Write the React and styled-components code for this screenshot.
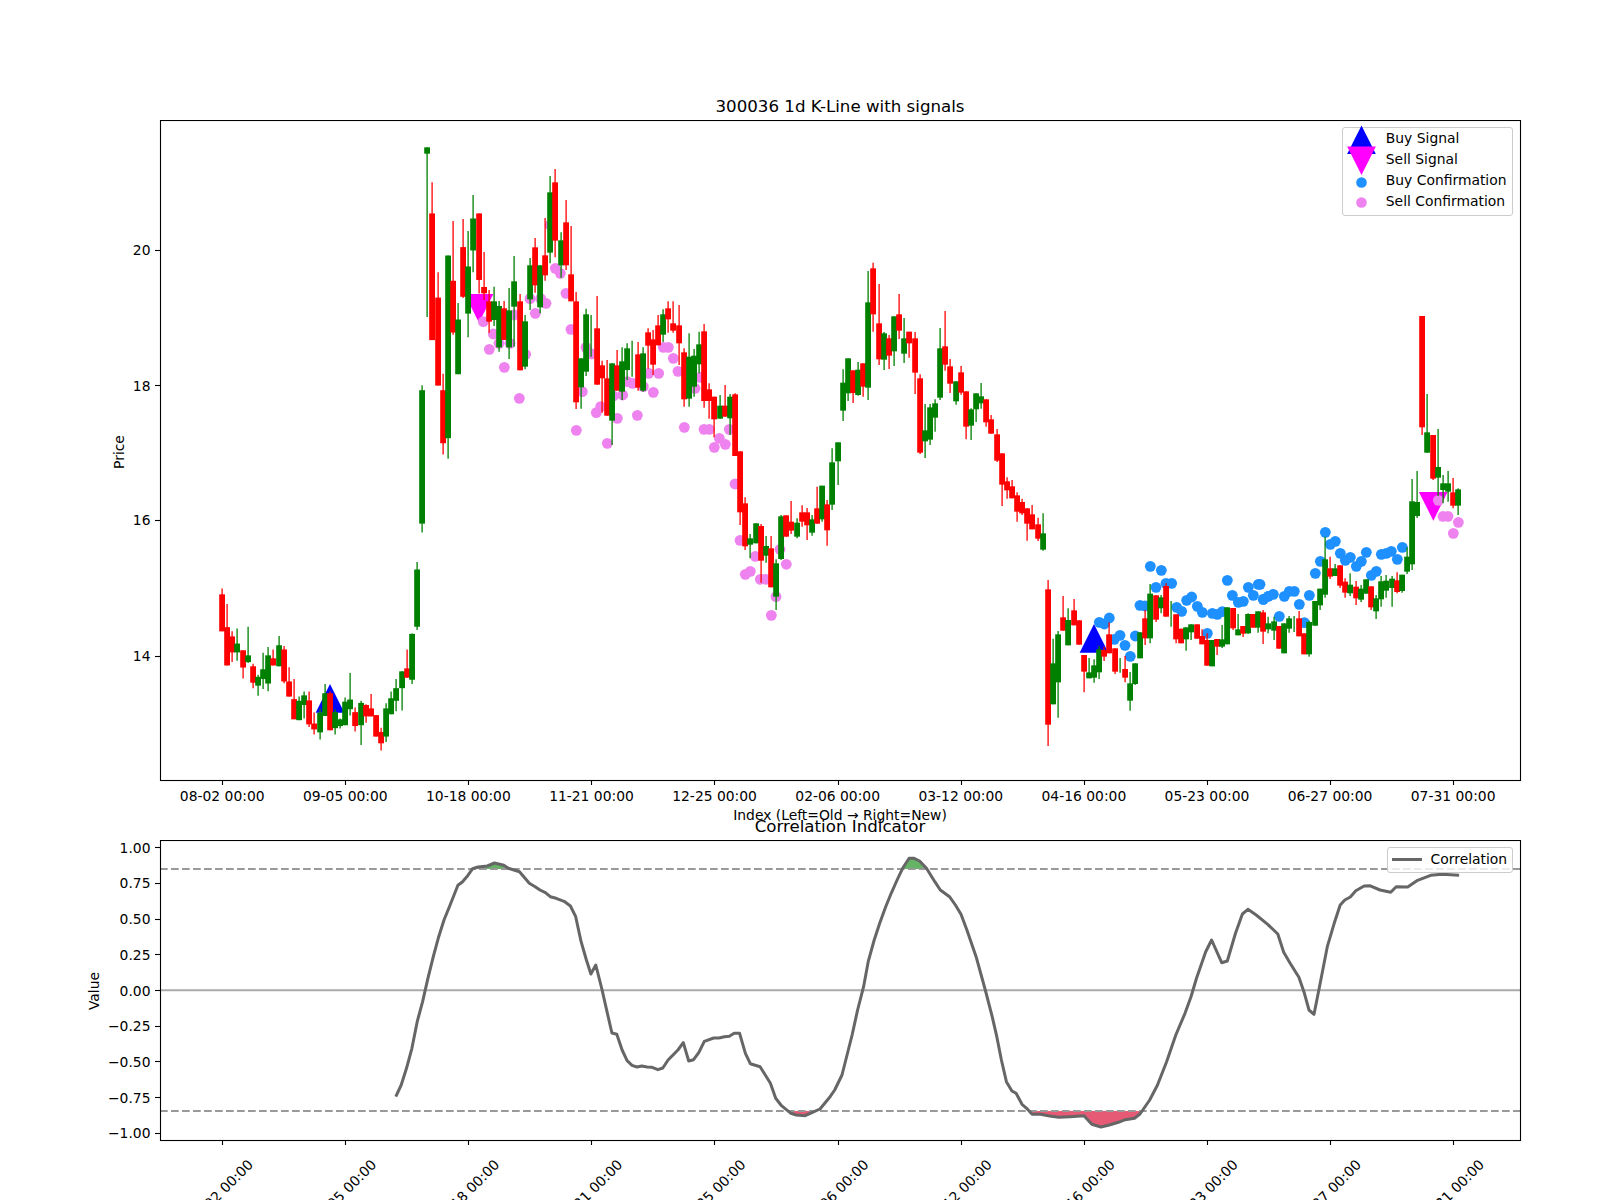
import React from 'react';
import styled, { createGlobalStyle } from 'styled-components';

const Global = createGlobalStyle`
  html, body { margin: 0; padding: 0; background: #fff; }
`;

const Figure = styled.div`
  width: 1600px;
  height: 1200px;
  overflow: hidden;
  padding-top: 96px;
  box-sizing: border-box;
  display: flex;
  flex-direction: column;
  background: #fff;
  color: #000;
  font-family: "DejaVu Sans", sans-serif;
`;
const PanelTitle = styled.div`
  margin-top: ${p => p.$overlap || 0}px;
  margin-bottom: ${p => p.$after}px;
  margin-left: 160px;
  width: 1360px;
  height: 22px;
  line-height: 22px;
  font-size: 16.67px;
  text-align: center;
  position: relative;
`;
const XAxisTitle = styled.div`
  margin-left: 160px;
  width: 1360px;
  height: 20px;
  line-height: 20px;
  font-size: 13.89px;
  text-align: center;
`;
const ChartArea = styled.div`
  position: relative;
  width: 1600px;
  height: ${p => p.$h}px;
  flex: none;
`;
const ChartSvg = styled.svg`
  display: block;
  width: 100%;
  height: 100%;
`;
const TickText = styled.text`
  font-family: "DejaVu Sans", sans-serif;
  font-size: 13.89px;
  fill: #000;
`;
const Legend = styled.div`
  position: absolute;
  box-sizing: border-box;
  top: ${p => p.$top}px;
  left: ${p => p.$left}px;
  width: ${p => p.$w}px;
  height: ${p => p.$h}px;
  padding: ${p => p.$pad};
  background: rgba(255, 255, 255, 0.8);
  border: 1px solid #ccc;
  border-radius: 3px;
  display: flex;
  flex-direction: column;
`;
const LegendRow = styled.div`
  display: flex;
  align-items: center;
  height: ${p => p.$h}px;
  gap: ${p => p.$gap}px;
  font-size: 13.89px;
  white-space: nowrap;
`;
const LegendLabel = styled.span`
  margin-top: ${p => p.$lift || 0}px;
`;
const LegendMark = styled.svg`
  width: ${p => p.$w}px;
  height: 20px;
  flex: none;
  overflow: visible;
`;

const X = i => 222.6 + 5.129 * i;
const SX = i => Math.floor(X(i)) + 0.1;

// [color, wickTop, bodyTop, bodyBottom, wickBottom] as read off the crops
const R = 1, G = 0;
const seg1 = [
[R,1113,1127,1215,1215],[R,1150,1205,1296,1296],[R,1215,1227,1265,1288],[G,1208,1244,1265,1285],[R,1260,1260,1301,1327],
[G,1204,1272,1288,1290],[R,1292,1298,1337,1350],[G,1318,1323,1344,1368],[G,1266,1305,1328,1352],[G,1252,1272,1339,1357],
[R,1258,1279,1296,1296],[G,1226,1248,1298,1298],[R,1250,1258,1334,1338],[R,1300,1334,1370,1370],[R,1328,1376,1424,1424],
[G,1370,1380,1426,1426],[G,1358,1367,1390,1422],[R,1358,1379,1436,1442],[R,1408,1434,1448,1460],[G,1398,1408,1455,1472],
[G,1340,1362,1416,1416],[R,1358,1362,1450,1450],[G,1400,1407,1445,1460],[G,1422,1424,1440,1446],[G,1372,1382,1438,1438],
[G,1314,1377,1400,1415],[R,1396,1407,1440,1453],[G,1380,1385,1438,1485],[R,1388,1390,1417,1432],[R,1364,1398,1417,1417],
[R,1414,1414,1465,1465],[R,1444,1454,1481,1498],[G,1386,1398,1465,1478],[G,1358,1374,1412,1412],[G,1328,1350,1380,1405],
[G,1310,1310,1350,1403],[R,1258,1303,1325,1325],[G,1220,1221,1330,1340],[G,1050,1068,1204,1212],[G,630,642,959,980],
[G,65,65,80,468],[R,148,222,523,523],[R,362,422,631,631],[R,603,642,768,795],[G,322,322,756,805],
[R,240,382,505,510],[G,435,474,604,604],[R,235,302,420,423],[G,264,348,460,516],[G,178,234,310,362],
[R,222,222,380,412],
];
const seg2 = [
[R,336,441,460,480],[R,450,484,545,578],[G,440,484,540,558],[G,483,498,622,635],[R,483,505,600,600],
[G,444,511,622,657],[G,348,424,500,620],[R,462,484,691,691],[G,525,544,680,688],[G,354,376,478,510],
[R,294,322,436,458],[G,375,376,502,520],[R,234,346,406,422],[G,108,157,338,370],[R,87,127,302,352],
[G,277,301,376,413],[R,180,247,376,390],[R,258,403,484,484],[R,456,484,787,807],[G,655,655,742,806],
[G,506,523,695,708],[G,525,600,600,650],[R,468,565,734,734],[R,662,676,715,818],[R,660,715,827,827],
[G,670,670,842,915],[R,630,676,752,752],[G,622,664,755,780],[G,610,625,690,720],[G,602,650,650,710],
[R,606,643,743,752],[G,622,640,752,755],[R,565,577,617,686],[R,570,598,674,705],[R,525,556,616,616],
[G,508,523,584,606],[R,484,505,538,578],[R,484,550,572,578],[R,495,556,610,675],[R,625,637,778,800],
[G,580,650,776,800],[G,627,647,740,770],[G,575,613,673,700],[R,552,574,783,803],[R,730,748,783,836],
[R,770,770,838,892],[G,765,797,836,836],[R,735,797,830,830],[G,762,770,835,885],[R,760,763,948,948],
[R,934,934,1117,1155],[R,1072,1090,1219,1230],[G,1182,1195,1214,1255],[G,1150,1150,1210,1210],[R,1152,1158,1262,1328],
[G,1188,1218,1247,1268],[R,1188,1225,1342,1342],
];
const seg3 = [
[G,958,970,1070,1110],[G,825,829,957,960],[R,826,826,890,890],[R,783,845,872,882],[G,835,848,890,895],
[R,796,817,845,860],[R,804,817,856,900],[G,825,838,878,887],[R,740,805,851,851],[G,737,737,838,845],
[R,780,793,871,917],[G,625,667,794,810],[G,607,607,664,735],[G,388,428,512,543],[G,355,355,460,483],
[R,391,391,459,489],[G,366,389,465,467],[R,370,370,440,470],[G,93,187,443,480],[R,68,85,223,275],
[R,132,250,358,375],[G,276,280,359,390],[R,285,295,347,387],[G,229,229,334,378],[R,162,223,272,297],
[G,234,295,341,369],[R,275,275,310,353],[R,276,295,398,462],[R,403,415,638,642],[G,492,571,604,654],
[G,492,502,599,615],[G,478,490,533,575],[G,264,325,473,480],[R,213,319,374,392],[R,357,379,431,459],
[G,424,424,484,494],[R,378,397,458,464],[R,454,454,560,598],[G,505,508,557,600],[G,460,460,508,546],
[G,429,469,490,506],[R,478,478,547,560],[R,525,538,581,581],[R,567,583,662,666],[R,640,640,734,798],
[R,712,724,751,776],[R,720,739,775,775],[R,757,766,815,845],[R,776,786,820,825],[R,805,805,851,902],
[R,795,823,868,868],[R,833,853,896,903],[G,820,880,929,932],
];
const seg4 = [
[R,240,268,674,738],[G,416,490,613,613],[G,393,403,547,653],[R,288,352,392,392],[G,325,360,436,436],
[R,297,331,376,376],[R,361,361,434,434],[R,465,465,515,577],[G,474,517,535,535],[G,478,496,533,548],
[G,437,448,517,537],[R,440,450,470,483],[R,367,403,460,460],[R,445,445,515,522],[G,474,500,500,518],
[R,468,507,533,547],[G,516,550,602,632],[G,490,490,552,555],[G,397,397,475,475],[R,330,355,415,435],
[G,252,281,415,430],[R,286,286,359,366],[G,285,292,325,340],[R,250,258,350,350],[G,303,340,340,380],
[R,343,343,418,430],[R,386,386,430,430],[G,382,382,418,452],[G,373,373,397,420],[R,373,373,416,416],
[R,388,408,433,433],[R,400,420,497,497],[G,420,420,499,499],[R,417,417,440,465],[G,375,418,440,444],
[G,322,322,433,433],[R,324,324,385,390],[G,342,388,406,406],[R,378,378,401,411],[G,340,342,400,402],
[R,342,342,383,383],[G,334,334,383,398],[R,330,337,395,432],[G,350,370,388,400],
];
const seg5 = [
[G,950,964,992,1020],[R,978,978,1046,1046],[G,970,970,1060,1060],[G,948,955,986,998],[G,948,970,970,996],
[R,933,955,1009,1009],[R,1000,1000,1063,1063],[G,962,966,1063,1070],[G,903,903,977,977],[G,866,866,916,930],
[G,710,778,884,893],[R,770,805,830,837],[G,792,805,828,828],[R,796,796,857,864],[R,835,845,878,893],
[G,820,854,880,888],[R,843,860,895,915],[G,855,866,899,906],[G,838,838,881,881],[R,859,859,922,930],
[G,885,895,934,957],[G,828,844,898,920],[G,825,842,872,893],[G,828,836,864,920],[R,817,841,876,880],
[G,824,824,873,878],[G,742,770,815,822],[G,537,604,793,810],[G,513,606,648,654],[R,48,48,382,405],
[G,282,397,458,458],[R,405,405,536,540],[G,387,501,533,588],[G,525,550,570,610],[G,513,550,575,605],
[R,534,577,617,625],[G,565,568,617,645],
];
const toPage = (seg, oy, k) => seg.map(([c, a, b, d, e]) => [c, oy + a / k, oy + b / k, oy + d / k, oy + e / k]);
const candles = [
  ...toPage(seg1, 120, 2.376),
  ...toPage(seg2, 140, 3),
  ...toPage(seg3, 240, 3),
  ...toPage(seg4, 500, 3),
  ...toPage(seg5, 300, 3),
];

const pts = (list, ox, oy, kx = 3, ky = 3) => list.map(([a, b]) => [ox + a / kx, oy + b / ky]);
const pink = [
  ...pts([[10,545],[40,582],[28,628],[73,682],[57,610],[90,610],[103,525],[137,643],[118,775],[150,476],[182,476],[198,490],[166,520],[226,385],[241,400],[210,255],[258,460],[273,568],[289,871],[307,755],[318,622],[335,642],[349,818],[362,800],[382,910],[400,768],[412,835],[428,765],[442,725],[458,730],[472,826],[490,740],[506,700],[536,700],[520,757],[550,622],[565,622],[580,655],[594,694],[613,862],[645,745],[660,712],[672,868],[688,868],[703,922],[718,895],[736,913],[748,868],[765,1032],[780,1201],[796,1303],[811,1294],[826,1249],[841,1318],[857,1318],[874,1426],[888,1370],[900,1228]], 480, 140),
  [786.3, 564.3],
  ...pts([[535,601],[549,649],[564,649],[595,667],[580,700]], 1260, 300),
];
const blue = [
  ...pts([[208,367],[223,372],[238,354],[253,418],[270,406],[285,436],[301,469],[316,408],[330,316],[345,318],[361,199],[378,262],[394,211],[408,250],[425,250],[440,322],[455,334],[470,301],[485,291],[502,319],[517,337],[532,400],[547,340],[562,343],[577,335],[592,241],[607,286],[625,307],[640,304],[655,262],[670,286],[685,253],[700,298],[715,289]], 1030, 500),
  ...pts([[0,853],[10,898],[25,889],[40,883],[73,889],[88,874],[103,874],[58,949],[118,913],[133,968],[148,886],[166,820],[181,784],[196,697],[211,733],[226,724],[241,760],[256,781],[271,772],[289,799],[304,784],[319,757],[334,826],[349,814],[364,763],[379,760],[394,754],[412,778],[427,742]], 1260, 300),
];

const curve = [
  ...pts([[573,1010],[585,975],[597,925],[609,865],[621,785],[633,725],[645,655],[657,590],[669,530],[681,480],[693,440],[712,376],[722,366],[734,347],[745,326],[757,321],[778,318],[794,309],[815,316],[825,325],[850,335],[872,370],[885,380],[896,390],[908,398],[919,410],[932,415],[950,424],[964,438],[976,470],[988,545],[1000,600],[1010,642],[1021,615],[1035,690],[1047,760],[1057,819],[1068,823],[1080,870],[1091,902],[1102,916],[1113,921],[1124,918],[1136,921],[1147,922],[1160,929],[1171,924],[1183,900],[1205,870],[1217,848],[1229,903],[1240,899],[1252,877],[1264,844],[1285,834],[1297,834],[1309,830],[1320,829],[1331,820],[1343,820],[1356,880],[1367,911],[1389,920],[1412,970],[1424,1015],[1437,1037],[1458,1060],[1470,1065],[1490,1067],[1505,1058]], 140, 760, 2.24, 3),
  ...pts([[0,1047],[22,1010],[32,990],[48,945],[70,825],[82,750],[95,680],[105,605],[118,540],[130,490],[143,440],[155,400],[168,360],[180,325],[194,295],[205,295],[217,303],[232,325],[250,365],[262,390],[282,410],[295,435],[307,463],[320,510],[340,590],[360,690],[375,770],[385,830],[395,900],[406,965],[418,993],[427,1000],[440,1033],[450,1045],[462,1063],[480,1063],[500,1068],[520,1072],[545,1070],[575,1067],[592,1093],[612,1101],[630,1095],[650,1087],[665,1079],[685,1075],[697,1062],[718,1020],[735,975],[755,905],[775,825],[795,760],[808,710],[820,655],[840,575],[853,540],[875,608],[887,603],[905,520],[920,462],[932,448],[950,465],[975,493],[997,522],[1010,577],[1025,612],[1043,652],[1055,700],[1065,750],[1076,763],[1088,680],[1105,560],[1120,490],[1133,435],[1143,420],[1155,411],[1167,392],[1185,378],[1197,377],[1220,390],[1243,397],[1255,380],[1280,381],[1300,362],[1330,346],[1355,343],[1392,346]], 820, 760, 2.178, 3),
];
const curvePath = curve.map(([x, y], i) => `${i ? 'L' : 'M'}${x.toFixed(1)} ${y.toFixed(1)}`).join(' ');
const first = curve[0][0], last = curve[curve.length - 1][0];

const ticksX = Array.from({ length: 11 }, (_, k) => X(24 * k));
const dates = ['08-02 00:00','09-05 00:00','10-18 00:00','11-21 00:00','12-25 00:00','02-06 00:00','03-12 00:00','04-16 00:00','05-23 00:00','06-27 00:00','07-31 00:00'];
const priceTicks = [['20', 250], ['18', 385.7], ['16', 520.4], ['14', 656]];
const valueTicks = ['1.00','0.75','0.50','0.25','0.00','−0.25','−0.50','−0.75','−1.00'];
const valueY = i => 847.7 + i * 35.7;
const snap = v => Math.floor(v) + 0.5;

const Tri = ({ x, top, size, down, color }) => (
  <path d={down
    ? `M${x - size / 2} ${top} L${x + size / 2} ${top} L${x} ${top + size} Z`
    : `M${x} ${top} L${x + size / 2} ${top + size} L${x - size / 2} ${top + size} Z`} fill={color} />
);

const TopChart = () => (
  <ChartSvg viewBox="0 120 1600 685">
    <Tri x={330} top={684} size={28.7} color="#0000ff" />
    <Tri x={1094} top={624} size={28.7} color="#0000ff" />
    <Tri x={479} top={294} size={28.7} down color="#ff00ff" />
    <Tri x={1433.3} top={492} size={28.7} down color="#ff00ff" />
    {blue.map(([x, y], i) => <circle key={i} cx={x} cy={y} r={5.4} fill="#1e90ff" />)}
    {pink.map(([x, y], i) => <circle key={i} cx={x} cy={y} r={5.4} fill="#ee82ee" />)}
    {candles.map(([c, wt, bt, bb, wb], i) => {
      const color = c ? '#ff0000' : '#008000';
      const x = SX(i);
      return (
        <g key={i}>
          <line x1={x} x2={x} y1={wt} y2={wb} stroke={color} strokeWidth={1.3} />
          {bb > bt && <rect x={x - 2.9} y={bt} width={5.8} height={bb - bt} fill={color} />}
        </g>
      );
    })}
    <rect x={160.5} y={120.5} width={1360} height={660} fill="none" stroke="#000" strokeWidth={1.1} />
    {ticksX.map((x, i) => (
      <g key={i}>
        <line x1={snap(x)} x2={snap(x)} y1={780} y2={785} stroke="#000" strokeWidth={1.1} />
        <TickText x={x - 0.4} y={801} textAnchor="middle">{dates[i]}</TickText>
      </g>
    ))}
    {priceTicks.map(([t, y]) => (
      <g key={t}>
        <line x1={155} x2={160} y1={snap(y)} y2={snap(y)} stroke="#000" strokeWidth={1.1} />
        <TickText x={150.5} y={y + 5} textAnchor="end">{t}</TickText>
      </g>
    ))}
    <TickText x={124} y={452} textAnchor="middle" transform="rotate(-90 124 452)">Price</TickText>
  </ChartSvg>
);

const BottomChart = () => (
  <ChartSvg viewBox="0 840 1600 360">
    <defs>
      <clipPath id="above"><rect x={160} y={840} width={1360} height={29} /></clipPath>
      <clipPath id="below"><rect x={160} y={1111} width={1360} height={29} /></clipPath>
    </defs>
    <path d={`${curvePath} L${last} 869 L${first} 869 Z`} fill="#008000" fillOpacity={0.6} clipPath="url(#above)" />
    <path d={`${curvePath} L${last} 1111 L${first} 1111 Z`} fill="#dc143c" fillOpacity={0.7} clipPath="url(#below)" />
    <line x1={160} x2={1520} y1={990.3} y2={990.3} stroke="#aaa" strokeWidth={2} />
    <line x1={160} x2={1520} y1={869} y2={869} stroke="#999" strokeWidth={2} strokeDasharray="7.7 3.3" />
    <line x1={160} x2={1520} y1={1111} y2={1111} stroke="#999" strokeWidth={2} strokeDasharray="7.7 3.3" />
    <path d={curvePath} fill="none" stroke="#666" strokeWidth={3} strokeLinejoin="round" />
    <rect x={160.5} y={840.5} width={1360} height={300} fill="none" stroke="#000" strokeWidth={1.1} />
    {ticksX.map((x, i) => (
      <g key={i}>
        <line x1={snap(x)} x2={snap(x)} y1={1140} y2={1145} stroke="#000" strokeWidth={1.1} />
        <TickText x={x - 2} y={1197} textAnchor="middle" transform={`rotate(-45 ${x - 2} 1192)`}>{dates[i]}</TickText>
      </g>
    ))}
    {valueTicks.map((t, i) => (
      <g key={t}>
        <line x1={155} x2={160} y1={snap(valueY(i))} y2={snap(valueY(i))} stroke="#000" strokeWidth={1.1} />
        <TickText x={150.5} y={valueY(i) + 5} textAnchor="end">{t}</TickText>
      </g>
    ))}
    <TickText x={99} y={991} textAnchor="middle" transform="rotate(-90 99 991)">Value</TickText>
  </ChartSvg>
);

const SignalLegend = () => (
  <Legend $top={7.3} $left={1342.3} $w={171} $h={88.4} $pad="0 0 0 3.5px">
    <LegendRow $h={20.9} $gap={10}>
      <LegendMark $w={29} viewBox="0 0 29 20"><Tri x={14.5} top={-3.6} size={28.7} color="#0000ff" /></LegendMark>
      <LegendLabel $lift={-2}>Buy Signal</LegendLabel>
    </LegendRow>
    <LegendRow $h={20.9} $gap={10}>
      <LegendMark $w={29} viewBox="0 0 29 20"><Tri x={14.5} top={-3.6} size={28.7} down color="#ff00ff" /></LegendMark>
      <LegendLabel $lift={-2}>Sell Signal</LegendLabel>
    </LegendRow>
    <LegendRow $h={20.9} $gap={10}>
      <LegendMark $w={29} viewBox="0 0 29 20"><circle cx={14.5} cy={11.5} r={5.3} fill="#1e90ff" /></LegendMark>
      <LegendLabel $lift={-2}>Buy Confirmation</LegendLabel>
    </LegendRow>
    <LegendRow $h={20.9} $gap={10}>
      <LegendMark $w={29} viewBox="0 0 29 20"><circle cx={14.5} cy={11.5} r={5.3} fill="#ee82ee" /></LegendMark>
      <LegendLabel>Sell Confirmation</LegendLabel>
    </LegendRow>
  </Legend>
);

const CorrLegend = () => (
  <Legend $top={7.3} $left={1386.6} $w={126.2} $h={25.4} $pad="0 0 0 4.5px">
    <LegendRow $h={22} $gap={8.5}>
      <LegendMark $w={30} viewBox="0 0 30 20"><line x1={0} x2={30} y1={10.5} y2={10.5} stroke="#666" strokeWidth={3} /></LegendMark>
      <LegendLabel>Correlation</LegendLabel>
    </LegendRow>
  </Legend>
);

export default function App() {
  return (
    <Figure>
      <Global />
      <PanelTitle $after={2}>300036 1d K-Line with signals</PanelTitle>
      <ChartArea $h={685}>
        <TopChart />
        <SignalLegend />
      </ChartArea>
      <XAxisTitle>Index (Left=Old → Right=New)</XAxisTitle>
      <PanelTitle $overlap={-9} $after={2}>Correlation Indicator</PanelTitle>
      <ChartArea $h={360}>
        <BottomChart />
        <CorrLegend />
      </ChartArea>
    </Figure>
  );
}
